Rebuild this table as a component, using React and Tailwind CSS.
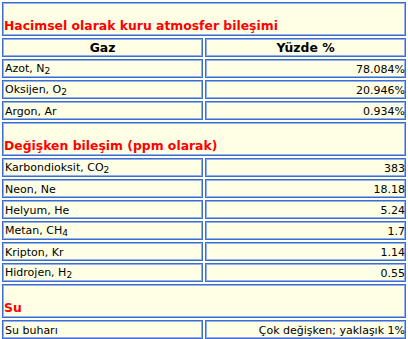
import { Fragment } from 'react';

const sections = [
  {
    title: 'Hacimsel olarak kuru atmosfer bileşimi',
    columns: true,
    rows: [
      [<>Azot, N<sub>2</sub></>, '78.084%'],
      [<>Oksijen, O<sub>2</sub></>, '20.946%'],
      ['Argon, Ar', '0.934%'],
    ],
  },
  {
    title: 'Değişken bileşim (ppm olarak)',
    rows: [
      [<>Karbondioksit, CO<sub>2</sub></>, '383'],
      ['Neon, Ne', '18.18'],
      ['Helyum, He', '5.24'],
      [<>Metan, CH<sub>4</sub></>, '1.7'],
      ['Kripton, Kr', '1.14'],
      [<>Hidrojen, H<sub>2</sub></>, '0.55'],
    ],
  },
  {
    title: 'Su',
    rows: [['Su buharı', 'Çok değişken; yaklaşık 1%']],
  },
];

const cell =
  'border border-[#3d6cc9] shadow-[inset_0_0_0_1px_#8fb2ee] bg-[#ffffe6] p-0 leading-none';

function Row({ name, value }) {
  return (
    <tr>
      <td className={`${cell} h-[19px] w-1/2 pl-[2px] pt-[2px] text-left`}>{name}</td>
      <td className={`${cell} h-[19px] w-1/2 pt-[2px] text-right`}>{value}</td>
    </tr>
  );
}

export default function App() {
  return (
    <div className="bg-white w-[408px] h-[339px] overflow-hidden text-[11px] text-black font-['DejaVu_Sans',sans-serif] [&_sub]:text-[9px] [&_sub]:align-[-2px] [&_sub]:bottom-0 [&_sub]:leading-none">
      <table className="w-full border-separate border-spacing-[2px] table-fixed">
        <tbody>
          {sections.map((s) => (
            <Fragment key={s.title}>
              <tr>
                <td
                  colSpan={2}
                  className={`${cell} h-[34px] align-bottom pl-[1px] pb-[3px] text-[12.4px] font-bold text-[#ff0000]`}
                >
                  {s.title}
                </td>
              </tr>
              {s.columns && (
                <tr>
                  <th className={`${cell} h-[19px] pt-[1px] text-[12.4px] font-bold text-center`}>Gaz</th>
                  <th className={`${cell} h-[19px] pt-[1px] text-[12.4px] font-bold text-center`}>Yüzde %</th>
                </tr>
              )}
              {s.rows.map(([name, value], i) => (
                <Row key={i} name={name} value={value} />
              ))}
            </Fragment>
          ))}
        </tbody>
      </table>
    </div>
  );
}
